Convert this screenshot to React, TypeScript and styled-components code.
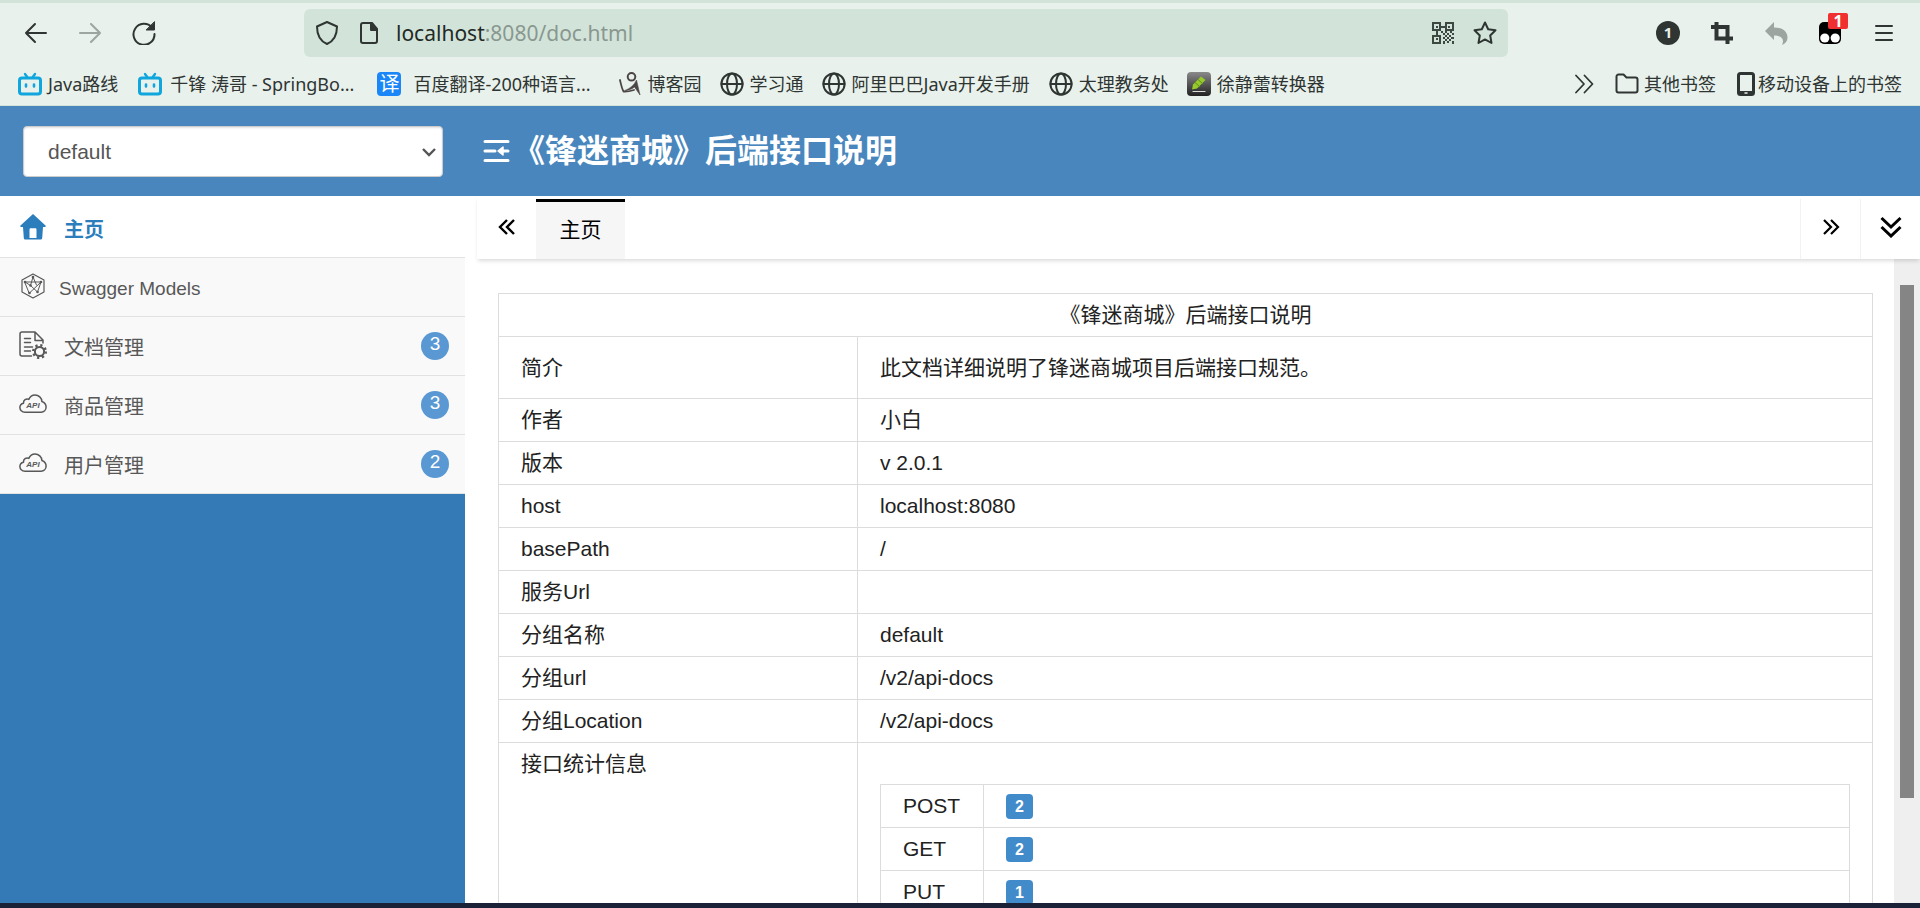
import React from "react";
import styled, { createGlobalStyle } from "styled-components";

const arial = `"Liberation Sans", Arial, "Noto Sans CJK SC", sans-serif`;
const chrome = `"Noto Sans", "Noto Sans CJK SC", sans-serif`;

const GlobalStyle = createGlobalStyle`
  *, *::before, *::after { box-sizing: border-box; }
  body { margin: 0; background: #fff; font-family: ${arial}; }
  button, input, select { font: inherit; color: inherit; margin: 0; padding: 0; border: 0; background: none; outline: 0; }
  a { color: inherit; text-decoration: none; }
  svg { display: block; flex: none; }
`;

const Page = styled.div`
  display: flex;
  flex-direction: column;
  height: 100vh;
  overflow: hidden;
  background: #fff;
  border-bottom: 5px solid #1b2136;
`;

/* ---------- browser bars ---------- */

const BrowserBars = styled.header`
  flex: none;
  background: #e9f1ec;
  border-top: 3px solid #d2e4d9;
  border-bottom: 1px solid #d2e4d9;
  color: #2e3532;
  font-family: ${chrome};
`;

const Toolbar = styled.div`
  display: flex;
  align-items: center;
  height: 60px;
  padding: 0 24px;
`;

const IconGroup = styled.div<{ $gap: number; $width?: number }>`
  display: flex;
  align-items: center;
  gap: ${(p) => p.$gap}px;
  width: ${(p) => (p.$width ? `${p.$width}px` : "auto")};
`;

const IconButton = styled.button<{ $faded?: boolean }>`
  position: relative;
  display: flex;
  align-items: center;
  justify-content: center;
  width: 24px;
  height: 24px;
  opacity: ${(p) => (p.$faded ? 0.4 : 1)};
`;

const AddressBar = styled.form`
  display: flex;
  align-items: center;
  flex: 1;
  height: 48px;
  margin-right: 148px;
  padding: 0 11px;
  border-radius: 6px;
  background: #d2e4d9;
  font-size: 21px;
  line-height: 30px;
`;

const Host = styled.label`
  margin-left: 17px;
  color: #222a26;
`;

const AddressInput = styled.input`
  flex: 1;
  min-width: 0;
  color: #8a9790;
`;

const Badge = styled.span`
  position: absolute;
  top: -8px;
  right: -6px;
  width: 20px;
  height: 16px;
  border-radius: 2px;
  background: #f03030;
  color: #fff;
  font-size: 16px;
  font-weight: 700;
  line-height: 16px;
  text-align: center;
`;

const BookmarkBar = styled.nav`
  display: flex;
  align-items: center;
  height: 42px;
  padding: 0 18px;
  font-size: 18px;
  line-height: 24px;
  white-space: nowrap;
`;

const Bookmark = styled.a<{ $gap: number; $after: number }>`
  display: flex;
  align-items: center;
  gap: ${(p) => p.$gap}px;
  margin-right: ${(p) => p.$after}px;
`;

const Spacer = styled.div`
  flex: 1;
`;

/* ---------- application header ---------- */

const AppHeader = styled.header`
  display: flex;
  align-items: center;
  flex: none;
  height: 90px;
  background: #4886bd;
  color: #fff;
`;

const GroupPicker = styled.div`
  position: relative;
  width: 420px;
  margin: 0 41px 0 23px;
`;

const GroupSelect = styled.select`
  appearance: none;
  width: 100%;
  height: 51px;
  padding: 0 24px;
  border: 1px solid #ccc;
  border-radius: 4px;
  background: #fff;
  box-shadow: inset 0 1px 2px rgba(0, 0, 0, 0.12);
  color: #555;
  font-size: 21px;
`;

const SelectArrow = styled.svg`
  position: absolute;
  top: 22px;
  right: 7px;
  pointer-events: none;
`;

const AppTitle = styled.h1`
  margin: 0 0 0 5px;
  font-size: 32px;
  line-height: 40px;
  font-weight: 700;
`;

/* ---------- body ---------- */

const Body = styled.div`
  display: flex;
  flex: 1;
  min-height: 0;
`;

const Sidebar = styled.nav`
  width: 465px;
  flex: none;
  background: #337ab7;
`;

const NavItem = styled.a<{ $active?: boolean }>`
  display: flex;
  align-items: center;
  height: ${(p) => (p.$active ? 62 : 59)}px;
  padding: ${(p) => (p.$active ? 3 : 0)}px 16px 0 19px;
  border-bottom: 1px solid #e2e2e2;
  background: ${(p) => (p.$active ? "#fff" : "#f9f9f9")};
  color: ${(p) => (p.$active ? "#2b7dbc" : "#585858")};
  font-weight: ${(p) => (p.$active ? 700 : 400)};
`;

const NavIcon = styled.span`
  display: flex;
  justify-content: center;
  width: 28px;
  padding-bottom: 2px;
`;

const NavText = styled.span<{ $latin?: boolean }>`
  flex: 1;
  margin-left: ${(p) => (p.$latin ? 12 : 17)}px;
  padding-top: 4px;
  font-size: ${(p) => (p.$latin ? 19 : 20)}px;
  line-height: 28px;
`;

const Count = styled.span`
  width: 28px;
  height: 28px;
  border-radius: 14px;
  background: #5998d2;
  color: #fff;
  font-size: 19px;
  line-height: 24px;
  text-align: center;
`;

const Main = styled.main`
  display: flex;
  flex: 1;
  flex-direction: column;
  min-width: 0;
  margin-left: 12px;
`;

const TabBar = styled.div`
  position: relative;
  display: flex;
  flex: none;
  height: 63px;
  padding-top: 3px;
  background: #fff;
  box-shadow: 0 3px 4px -1px rgba(0, 0, 0, 0.14);
  color: #000;
`;

const TabControl = styled.button<{ $ruled?: boolean }>`
  display: flex;
  align-items: center;
  justify-content: center;
  width: ${(p) => (p.$ruled ? 60 : 59)}px;
  padding-bottom: 4px;
  border-left: ${(p) => (p.$ruled ? "1px solid #f2f2f2" : "0")};
`;

const Tab = styled.button`
  width: 89px;
  padding-bottom: 2px;
  border-top: 3px solid #000;
  background: #f6f6f6;
  font-size: 21px;
  line-height: 30px;
`;

const Scroller = styled.div`
  display: flex;
  flex: 1;
  min-height: 0;
`;

const Content = styled.div`
  flex: 1;
  min-width: 0;
  padding: 34px 21px 0;
  overflow: hidden;
`;

const Track = styled.div`
  width: 26px;
  padding: 26px 6px 0;
  background: #efefef;
`;

const Thumb = styled.div`
  height: 83%;
  background: #858585;
`;

const Table = styled.table`
  width: 100%;
  border-collapse: collapse;
  color: #222;
  font-size: 21px;
  line-height: 30px;
`;

const Cell = styled.td<{ $tall?: boolean; $width?: string }>`
  height: ${(p) => (p.$tall ? 62 : 43)}px;
  width: ${(p) => p.$width ?? "auto"};
  padding: 6px 22px;
  border: 1px solid #dcdcdc;
  vertical-align: ${(p) => (p.$tall ? "middle" : "top")};
`;

const TitleCell = styled(Cell).attrs({ as: "th" })`
  font-weight: 400;
  text-align: center;
`;

const StatsTable = styled(Table)`
  margin: 35px 0 20px;
`;

const Label = styled.span`
  display: block;
  width: 27px;
  margin: 3px 0 2px;
  border-radius: 4px;
  background: #428bca;
  color: #fff;
  font-size: 16px;
  font-weight: 700;
  line-height: 25px;
  text-align: center;
`;

/* ---------- icons ---------- */

const Svg = ({ s = 24, w, children, ...rest }: any) => (
  <svg width={w ?? s} height={s} viewBox={`0 0 ${w ?? s} ${s}`} fill="none" stroke="currentColor" strokeWidth="2" strokeLinecap="round" strokeLinejoin="round" aria-hidden="true" {...rest}>
    {children}
  </svg>
);

const BiliIcon = () => (
  <Svg stroke="#0fa5dd">
    <path d="M7 2l2.500 3.500M17 2l-2.500 3.500" strokeWidth="2.400" />
    <rect x="1.500" y="6" width="21" height="16" rx="2.500" strokeWidth="3" />
    <path d="M8 12.500v2M16 12.500v2" strokeWidth="2.600" />
  </Svg>
);

const TranslateIcon = styled.span`
  width: 24px;
  height: 24px;
  border-radius: 4px;
  background: #1a86f7;
  color: #fff;
  font-size: 20px;
  line-height: 23px;
  text-align: center;
`;

const FigureIcon = () => (
  <Svg w={22} strokeWidth="2" stroke="#4b4645">
    <circle cx="12.500" cy="4.800" r="3.800" />
    <path d="M1 8c1 4 1.500 8 3.500 11.500 3 .2 7-.5 10.500-1.500" strokeWidth="1.800" />
    <path d="M6 18.500c5-2 9-5 11.500-10.500l3.500 15-5.500-8c-2.500 2-6 3.500-9.500 3.500z" fill="#4b4645" strokeWidth=".6" />
  </Svg>
);

const GlobeIcon = () => (
  <Svg>
    <circle cx="12" cy="12" r="10.600" />
    <ellipse cx="12" cy="12" rx="5" ry="10.600" />
    <path d="M1.500 12h21" />
  </Svg>
);

const PencilIcon = () => (
  <Svg stroke="none">
    <defs>
      <linearGradient id="pencilBack" x1="0" y1="0" x2="0" y2="1">
        <stop offset="0" stopColor="#8a8a8a" />
        <stop offset="1" stopColor="#222" />
      </linearGradient>
    </defs>
    <rect width="24" height="24" rx="4" fill="url(#pencilBack)" />
    <path d="M5 17.500l1-5 8-8 4.500 3.500-8.500 8.500z" fill="#95c92c" />
    <path d="M11 7.500l4.500 4M8 10.500l4.500 4" stroke="#5f8f16" strokeWidth="1" />
    <path d="M6 19.500h12" stroke="#ddd" strokeWidth="1.200" />
  </Svg>
);

const QrIcon = () => (
  <Svg s={22} stroke="none" fill="#3d4842" shapeRendering="crispEdges">
    <path fillRule="evenodd" d="M0 0h9v9H0zM2 2v5h5V2zM13 0h9v9h-9zM15 2v5h5V2zM0 13h9v9H0zM2 15v5h5v-5z" />
    <path d="M4 4h2v2H4zM16 4h2v2h-2zM4 16h2v2H4zM9 4h4v2H9zM4 9h2v4H4zM9 9h2v2H9zM13 9h2v2h-2zM18 9h2v2h-2zM11 11h2v2h-2zM15 11h2v2h-2zM20 11h2v2h-2zM13 13h2v2h-2zM17 13h2v2h-2zM11 15h2v2h-2zM15 15h2v2h-2zM19 15h3v2h-3zM13 17h2v2h-2zM17 17h2v2h-2zM11 19h2v3h-2zM15 19h2v2h-2zM20 19h2v3h-2z" />
  </Svg>
);

const CloudIcon = () => (
  <Svg w={28} s={20} strokeWidth="1.500">
    <path d="M6 18.200C2.800 18.200.9 16 .9 13.600c0-2.200 1.500-4 3.600-4.400-.3-3 2.700-5 5.300-3.800C11 2.600 13.400 1 16 1c3.700 0 6.700 2.800 6.900 6.500 2.400.9 4.200 3 4.200 5.600 0 2.900-2.200 5.100-5 5.100z" />
    <text x="14" y="14" textAnchor="middle" fill="currentColor" stroke="none" fontSize="8" fontStyle="italic" fontWeight="700" fontFamily="Liberation Sans">API</text>
  </Svg>
);

const DocGearIcon = () => (
  <Svg s={28} strokeWidth="1.500">
    <path d="M12.500 25H3c-1.200 0-2-.8-2-2V3c0-1.200.8-2 2-2h13l8 8v3M16 1v8.500h8" />
    <path d="M5.500 7.500h6M5.500 11.500h6M5.500 16h8M5.500 20h6" />
    <circle cx="20.500" cy="20.500" r="4.600" strokeWidth="2" />
    <circle cx="20.500" cy="20.500" r="6.300" strokeWidth="2.400" strokeDasharray="2.200 2.750" strokeLinecap="butt" />
  </Svg>
);

const ModelIcon = () => (
  <Svg w={24} s={26} strokeWidth="1.200">
    <path d="M12 1l11 6v12l-11 6-11-6V7z" />
    <path d="M4 9h16L8.500 20zM12 4L9.500 12.500M12 4l3.500 8M4 9l5.500 3.500L16.500 19l3.500-10" strokeWidth="1" />
    <g fill="currentColor" stroke="none">
      <circle cx="12" cy="4" r="1.300" />
      <circle cx="4" cy="9" r="1.300" />
      <circle cx="20" cy="9" r="1.300" />
      <circle cx="8.500" cy="20" r="1.300" />
      <circle cx="16.500" cy="19" r="1.300" />
      <circle cx="9.500" cy="12.500" r="1.300" />
    </g>
  </Svg>
);

const HomeIcon = () => (
  <Svg s={26} stroke="none">
    <path fillRule="evenodd" fill="currentColor" d="M13 0l12.500 11.500c.6.700.2 1.500-.6 1.500h-1.900l-.8 11c-.1 1-.8 1.600-1.700 1.600H5.500c-.9 0-1.600-.6-1.700-1.600L3 13H1.100c-.8 0-1.200-.8-.6-1.500zM9.500 15.500v8.500h7v-8.500c0-.8-.5-1.300-1.300-1.300h-4.400c-.8 0-1.300.5-1.300 1.300z" />
  </Svg>
);

/* ---------- data ---------- */

const bookmarks = [
  { icon: <BiliIcon />, text: "Java路线", gap: 6, after: 20 },
  { icon: <BiliIcon />, text: "千锋 涛哥 - SpringBo...", gap: 8, after: 23 },
  { icon: <TranslateIcon aria-hidden="true">译</TranslateIcon>, text: "百度翻译-200种语言...", gap: 12, after: 28 },
  { icon: <FigureIcon />, text: "博客园", gap: 7, after: 18 },
  { icon: <GlobeIcon />, text: "学习通", gap: 6, after: 18 },
  { icon: <GlobeIcon />, text: "阿里巴巴Java开发手册", gap: 6, after: 19 },
  { icon: <GlobeIcon />, text: "太理教务处", gap: 6, after: 18 },
  { icon: <PencilIcon />, text: "徐静蕾转换器", gap: 6, after: 0 },
];

const groups = [
  { icon: <DocGearIcon />, text: "文档管理", count: 3 },
  { icon: <CloudIcon />, text: "商品管理", count: 3 },
  { icon: <CloudIcon />, text: "用户管理", count: 2 },
];

const rows = [
  ["简介", "此文档详细说明了锋迷商城项目后端接口规范。"],
  ["作者", "小白"],
  ["版本", "v 2.0.1"],
  ["host", "localhost:8080"],
  ["basePath", "/"],
  ["服务Url", ""],
  ["分组名称", "default"],
  ["分组url", "/v2/api-docs"],
  ["分组Location", "/v2/api-docs"],
];

const stats = [
  ["POST", 2],
  ["GET", 2],
  ["PUT", 1],
];

export default function App() {
  return (
    <Page lang="zh-CN">
      <GlobalStyle />
      <BrowserBars>
        <Toolbar>
          <IconGroup $gap={30} $width={280}>
            <IconButton aria-label="后退"><Svg><path d="M22 12H2M11 3l-9 9 9 9" /></Svg></IconButton>
            <IconButton aria-label="前进" $faded><Svg><path d="M2 12h20M13 3l9 9-9 9" /></Svg></IconButton>
            <IconButton aria-label="刷新">
              <Svg>
                <path d="M20 6.500A10.500 10.500 0 1 0 22.500 13" />
                <path d="M22.500 1v8h-8z" fill="currentColor" strokeWidth="1" />
              </Svg>
            </IconButton>
          </IconGroup>
          <AddressBar onSubmit={(e) => e.preventDefault()}>
            <IconGroup $gap={20}>
              <Svg><path d="M12 1l10 4.500C22 14 19 20 12 23 5 20 2 14 2 5.500z" /></Svg>
              <Svg w={20} s={24}>
                <path d="M13 2H4a2 2 0 0 0-2 2v16a2 2 0 0 0 2 2h12a2 2 0 0 0 2-2V8z" />
                <path d="M12 2v7h6z" fill="currentColor" />
              </Svg>
            </IconGroup>
            <Host htmlFor="address">localhost</Host>
            <AddressInput id="address" defaultValue=":8080/doc.html" />
            <IconGroup $gap={18}>
              <IconButton type="button" aria-label="二维码"><QrIcon /></IconButton>
              <IconButton type="button" aria-label="收藏">
                <Svg><path d="M12 1.500l3.200 6.800 7.300 1-5.300 5.200 1.300 7.500-6.500-3.600-6.500 3.600 1.300-7.500L1.500 9.300l7.300-1z" /></Svg>
              </IconButton>
            </IconGroup>
          </AddressBar>
          <IconGroup $gap={30}>
            <IconButton aria-label="扩展">
              <Svg stroke="none">
                <circle cx="12" cy="12" r="12" fill="currentColor" />
                <text x="12" y="17" textAnchor="middle" fill="#e9f1ec" fontSize="15" fontWeight="700">1</text>
              </Svg>
            </IconButton>
            <IconButton aria-label="截图">
              <Svg strokeWidth="4" strokeLinecap="butt" strokeLinejoin="miter"><path d="M1 6h16.500v17M6.500 1v16.500H23" /></Svg>
            </IconButton>
            <IconButton aria-label="撤销" $faded>
              <Svg stroke="none" fill="currentColor"><path d="M10 1v5.500c9 0 13.500 4.500 13.500 10 0 3.500-2 6-5.500 7.500 2.500-5 .5-9.500-8-9.500V19L1 10z" /></Svg>
            </IconButton>
            <IconButton aria-label="脚本管理">
              <Svg stroke="none">
                <rect x="1" y="1" width="22" height="22" rx="5" fill="#000" />
                <circle cx="6.800" cy="17" r="4.600" fill="#fff" />
                <circle cx="17.200" cy="17" r="4.600" fill="#fff" />
              </Svg>
              <Badge>1</Badge>
            </IconButton>
            <IconButton aria-label="菜单"><Svg><path d="M4 5h16M4 12h16M4 19h16" /></Svg></IconButton>
          </IconGroup>
        </Toolbar>
        <BookmarkBar>
          {bookmarks.map((b) => (
            <Bookmark key={b.text} href="#" $gap={b.gap} $after={b.after}>
              {b.icon}
              {b.text}
            </Bookmark>
          ))}
          <Spacer />
          <Bookmark as="button" aria-label="更多书签" $gap={0} $after={21}>
            <Svg w={20}><path d="M2 3.500l8 8.500-8 8.500M10.500 3.500l8 8.500-8 8.500" strokeWidth="1.800" /></Svg>
          </Bookmark>
          <Bookmark href="#" $gap={5} $after={21}>
            <Svg><path d="M1.500 4.500a2 2 0 0 1 2-2h5l3 3h9a2 2 0 0 1 2 2v11a2 2 0 0 1-2 2h-17a2 2 0 0 1-2-2z" /></Svg>
            其他书签
          </Bookmark>
          <Bookmark href="#" $gap={3} $after={0}>
            <Svg w={18} strokeWidth="3"><rect x="1.500" y="1.500" width="15" height="21" rx="2" /><path d="M2 20.500h14" /><path d="M8 21h2" stroke="#e9f1ec" strokeWidth="1.500" /></Svg>
            移动设备上的书签
          </Bookmark>
        </BookmarkBar>
      </BrowserBars>

      <AppHeader>
        <GroupPicker>
          <GroupSelect aria-label="分组" defaultValue="default">
            <option>default</option>
          </GroupSelect>
          <SelectArrow width="14" height="9" viewBox="0 0 14 9" fill="none" stroke="#555" strokeWidth="2.400">
            <path d="M1 1l6 6 6-6" />
          </SelectArrow>
        </GroupPicker>
        <IconButton aria-label="收起菜单">
          <Svg w={28} s={26} strokeWidth="3"><path d="M3 3.500h23M3 13h10M3 22.500h23M19 13h7" /><path d="M21 9v8l-5-4z" fill="currentColor" strokeWidth="1.500" /></Svg>
        </IconButton>
        <AppTitle>《锋迷商城》后端接口说明</AppTitle>
      </AppHeader>

      <Body>
        <Sidebar>
          <NavItem href="#" $active>
            <NavIcon><HomeIcon /></NavIcon>
            <NavText>主页</NavText>
          </NavItem>
          <NavItem href="#">
            <NavIcon><ModelIcon /></NavIcon>
            <NavText $latin>Swagger Models</NavText>
          </NavItem>
          {groups.map((g) => (
            <NavItem key={g.text} href="#">
              <NavIcon>{g.icon}</NavIcon>
              <NavText>{g.text}</NavText>
              <Count>{g.count}</Count>
            </NavItem>
          ))}
        </Sidebar>
        <Main>
          <TabBar>
            <TabControl aria-label="向左">
              <Svg s={18}><path d="M9 2L2 9l7 7M16 2L9 9l7 7" strokeWidth="2.400" strokeLinecap="butt" strokeLinejoin="miter" /></Svg>
            </TabControl>
            <Tab>主页</Tab>
            <Spacer />
            <TabControl aria-label="向右" $ruled>
              <Svg s={18}><path d="M2 2l7 7-7 7M9 2l7 7-7 7" strokeWidth="2.200" strokeLinecap="butt" strokeLinejoin="miter" /></Svg>
            </TabControl>
            <TabControl aria-label="标签操作" $ruled>
              <Svg s={22}><path d="M1.500 2L11 11l9.500-9M1.500 11l9.500 9 9.500-9" strokeWidth="3" strokeLinecap="butt" strokeLinejoin="miter" /></Svg>
            </TabControl>
          </TabBar>
          <Scroller>
            <Content>
              <Table>
                <thead>
                  <tr>
                    <TitleCell colSpan={2}>《锋迷商城》后端接口说明</TitleCell>
                  </tr>
                </thead>
                <tbody>
                  {rows.map(([name, value], i) => (
                    <tr key={name}>
                      <Cell $tall={i === 0} $width="359px">{name}</Cell>
                      <Cell $tall={i === 0}>{value}</Cell>
                    </tr>
                  ))}
                  <tr>
                    <Cell>接口统计信息</Cell>
                    <Cell>
                      <StatsTable>
                        <tbody>
                          {stats.map(([method, count]) => (
                            <tr key={method}>
                              <Cell $width="103px">{method}</Cell>
                              <Cell><Label>{count}</Label></Cell>
                            </tr>
                          ))}
                        </tbody>
                      </StatsTable>
                    </Cell>
                  </tr>
                </tbody>
              </Table>
            </Content>
            <Track>
              <Thumb />
            </Track>
          </Scroller>
        </Main>
      </Body>
    </Page>
  );
}
